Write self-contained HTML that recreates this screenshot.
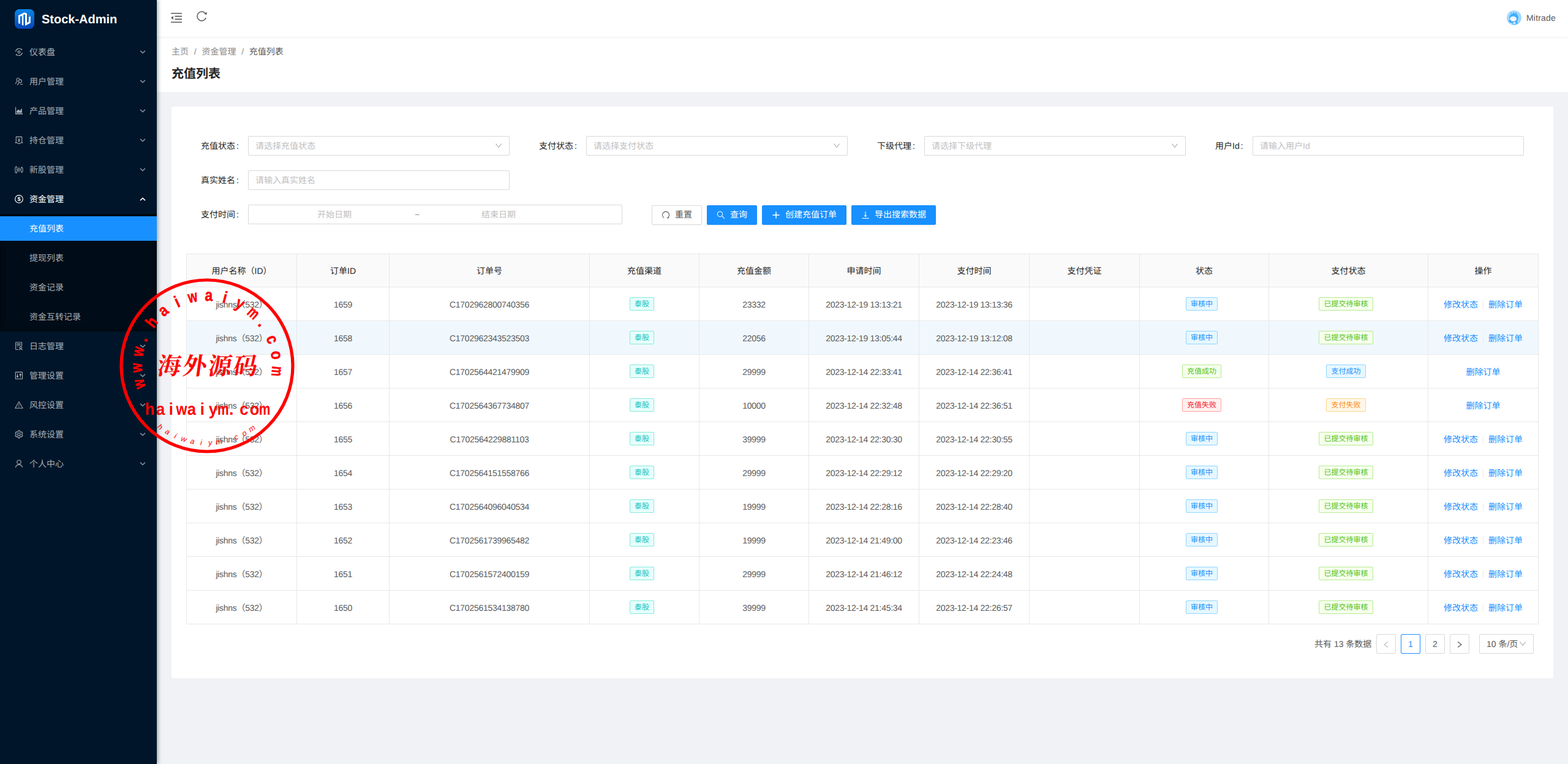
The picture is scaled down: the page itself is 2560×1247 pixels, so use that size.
<!DOCTYPE html>
<html lang="zh-CN"><head><meta charset="utf-8"><title>&#x5145;&#x503c;&#x5217;&#x8868; - Stock-Admin</title>
<style>
html,body{margin:0;padding:0}
body{width:2560px;height:1247px;position:relative;overflow:hidden;background:#f0f2f5;font-family:"Liberation Sans","Noto Sans CJK SC",sans-serif;font-size:14px;line-height:22px;color:#595959;text-rendering:geometricPrecision}
#side{position:absolute;left:0;top:0;width:256px;height:1247px;background:#001529;box-shadow:2px 0 6px rgba(0,21,41,.35);z-index:5}
#logo{position:absolute;left:24px;top:15px;width:32px;height:32px}
#logo svg{display:block}
#brand{position:absolute;left:68px;top:16px;line-height:32px;font-size:20px;font-weight:bold;color:#fff;white-space:nowrap}
.mi,.si{position:absolute;left:0;width:256px;height:40px;line-height:40px;color:#a6adb4;white-space:nowrap}
.mi .ic{position:absolute;left:24px;top:13px}
.mt{position:absolute;left:48px;top:0}
.ar{position:absolute;left:227px;top:16px;color:#7e8a96}
.mi.op{color:#fff}
.mi.op .ar{color:#fff}
#sub{position:absolute;left:0;width:256px;background:#000c17;box-shadow:inset 0 2px 8px rgba(0,0,0,.45)}
.si.sel{background:#1890ff;color:#fff}
#hdr{position:absolute;left:256px;top:0;width:2304px;height:60px;background:#fff;box-shadow:0 1px 4px rgba(0,21,41,.08);z-index:3}
#fold{position:absolute;left:23px;top:21px}
#reload{position:absolute;left:64.6px;top:18.4px}
#ava{position:absolute;left:2204px;top:17px;width:24px;height:24px}
#ava svg{display:block}
#uname{position:absolute;left:2236px;top:18px;line-height:22px;color:#595959;letter-spacing:.2px}
#ph{position:absolute;left:256px;top:60px;width:2304px;height:90px;background:#fff;z-index:2}
#bc{position:absolute;left:24px;top:13px;line-height:22px;color:#8c8c8c;white-space:nowrap}
#bc i{font-style:normal;display:inline-block;width:5.4px;text-align:center;margin:0 8px;color:#8c8c8c}
#bc .last{color:#595959}
#ttl{position:absolute;left:24px;top:45px;font-size:20px;line-height:32px;color:#262626;font-weight:bold}
#card{position:absolute;left:280px;top:174px;width:2256px;height:933px;background:#fff;border-radius:2px}
.lb{position:absolute;height:32px;line-height:32px;color:#262626;white-space:nowrap}
.lb b{font-weight:normal;margin-left:2px}
.ctl{position:absolute;height:30px;line-height:30px;border:1px solid #d9d9d9;border-radius:2px;background:#fff;white-space:nowrap}
.phd{position:absolute;left:11px;top:0;color:#bfbfbf}
.chev{position:absolute;right:11px;top:9px}
.rng .r1{left:112px}
.rng .r2{left:380px}
.til{position:absolute;left:271px;top:0;color:#8c8c8c}
.btn{position:absolute;top:335px;height:30px;line-height:30px;border:1px solid #d9d9d9;border-radius:2px;background:#fff;color:#595959;white-space:nowrap;box-shadow:0 2px 0 rgba(0,0,0,.015)}
.btn.pri{background:#1890ff;border-color:#1890ff;color:#fff;box-shadow:0 2px 0 rgba(0,0,0,.045)}
.btn .bi{position:absolute;left:15px;top:8px}
.btn span{position:absolute;left:37px;top:-1px}
#tb{position:absolute;left:304px;top:414px;width:2208px;height:605px;background:#fff}
.thbg{position:absolute;left:0;top:0;width:2208px;height:54px;background:#fafafa}
.hov{position:absolute;left:0;top:110px;width:2208px;height:54px;background:#f0f8fe}
.hl{position:absolute;left:0;width:2208px;height:1px;background:#e8e8e8}
.vl{position:absolute;top:0;width:1px;height:605px;background:#e8e8e8}
.c{position:absolute;box-sizing:border-box;padding-top:2px;display:flex;align-items:center;justify-content:center;white-space:nowrap;color:#595959;letter-spacing:-.28px}
.c.th{color:#262626;letter-spacing:0;padding-top:0}
.tag{position:relative;top:-1px;display:inline-block;height:20px;line-height:20px;padding:0 7px;margin-right:8px;border:1px solid;border-radius:2px;font-size:12px;letter-spacing:0}
.tag.cyan{color:#13c2c2;background:#e6fffb;border-color:#87e8de}
.tag.blue{color:#1890ff;background:#e6f7ff;border-color:#91d5ff}
.tag.green{color:#52c41a;background:#f6ffed;border-color:#b7eb8f}
.tag.red{color:#f5222d;background:#fff1f0;border-color:#ffa39e}
.tag.orange{color:#fa8c16;background:#fff7e6;border-color:#ffd591}
.c a{color:#1890ff;letter-spacing:0}
.c s{display:inline-block;width:1px;height:13px;background:#e8e8e8;margin:0 8px;text-decoration:none}
#pg{position:absolute;left:0;top:1035px;width:2560px;height:32px}
#pg>div{position:absolute;top:0;height:30px;line-height:30px;white-space:nowrap}
.tot{height:32px!important;line-height:32px!important;color:#595959}
.pb{width:30px;border:1px solid #d9d9d9;border-radius:2px;text-align:center;color:#595959;background:#fff}
.pb{position:absolute}.pb svg{position:absolute;left:9px;top:10px}
.pb.dis{color:#bfbfbf}
.pb.act{border-color:#1890ff;color:#1890ff}
.ps{width:87px;border:1px solid #d9d9d9;border-radius:2px;background:#fff;color:#595959}
.ps span{position:absolute;left:11px;top:0}
#stamp{position:absolute;left:187.8px;top:446.7px;z-index:9;pointer-events:none}

</style></head>
<body>
<div id="side">
<div id="logo"><svg width="32" height="32" viewBox="0 0 32 32"><defs><linearGradient id="lg" x1="0" y1="0" x2="0" y2="1"><stop offset="0" stop-color="#0a86ea"/><stop offset="1" stop-color="#0345b6"/></linearGradient></defs><rect width="32" height="32" rx="7.5" fill="url(#lg)"/><path fill="#fff" d="M6 10.3L15.8 5.2L20 7.1V22.05L22.9 20.4V12.95L25.8 11.6V22.6L17 27.1V9L15.8 8.4L14.3 9.1V26.9L11.8 25.4V11.6L10.4 10.9L8.9 11.95V24.1L6 23.1Z"/><path fill="#f56a1c" d="M22.9 9.3L25.4 10.7L22.9 12.1Z"/></svg></div>
<div id="brand">Stock-Admin</div>
<div class="mi" style="top:65px"><svg class="ic" width="14" height="14" viewBox="0 0 14 14"><g fill="none" stroke="currentColor" stroke-width="1.15"><path d="M1.6 6.2A5.6 5.6 0 0 1 11 2.8"/><path d="M12.4 7.8A5.6 5.6 0 0 1 3 11.2"/><circle cx="7" cy="7" r="1.9"/></g><path fill="currentColor" d="M9.6 1.4L12.4 1.9L11.2 4.4ZM4.4 12.6L1.6 12.1L2.8 9.6Z"/></svg><span class="mt">仪表盘</span><svg class="ar" width="12" height="8" viewBox="0 0 12 8"><path d="M2 1.9L6 5.6L10 1.9" fill="none" stroke="currentColor" stroke-width="1.6"/></svg></div>
<div class="mi" style="top:113px"><svg class="ic" width="14" height="14" viewBox="0 0 14 14"><g fill="none" stroke="currentColor" stroke-width="1.1" stroke-linecap="round"><path d="M7.6 2.6A2.5 2.5 0 1 0 4.4 6.2"/><path d="M4.2 6.6Q2 8 1.6 10.6"/><circle cx="8.9" cy="6.4" r="2.5"/><path d="M7.4 8.5L4.5 12.6"/><path d="M9.4 11.5H12.8"/></g></svg><span class="mt">用户管理</span><svg class="ar" width="12" height="8" viewBox="0 0 12 8"><path d="M2 1.9L6 5.6L10 1.9" fill="none" stroke="currentColor" stroke-width="1.6"/></svg></div>
<div class="mi" style="top:161px"><svg class="ic" width="14" height="14" viewBox="0 0 14 14"><path fill="currentColor" d="M1 .8H2.15V11.1H13.1V12.6H1ZM3.1 10.2V7.3L6 4.4L8.3 6.9L11.8 2.7V10.2Z"/></svg><span class="mt">产品管理</span><svg class="ar" width="12" height="8" viewBox="0 0 12 8"><path d="M2 1.9L6 5.6L10 1.9" fill="none" stroke="currentColor" stroke-width="1.6"/></svg></div>
<div class="mi" style="top:209px"><svg class="ic" width="14" height="14" viewBox="0 0 14 14"><g fill="none" stroke="currentColor" stroke-width="1.1" stroke-linejoin="round"><path d="M.7 10.7H2.3V1.4H11.7V10.7H13.3"/><path d="M.7 10.8Q4.5 11 7 12.7Q9.5 11 13.3 10.8"/><path d="M5.3 3.8L7 6.2L8.7 3.8M7 6.2V9.8M5.5 6.9H8.5M5.5 8.3H8.5" stroke-width="1"/></g></svg><span class="mt">持仓管理</span><svg class="ar" width="12" height="8" viewBox="0 0 12 8"><path d="M2 1.9L6 5.6L10 1.9" fill="none" stroke="currentColor" stroke-width="1.6"/></svg></div>
<div class="mi" style="top:257px"><svg class="ic" width="14" height="14" viewBox="0 0 14 14"><g fill="none" stroke="currentColor" stroke-width="1.05" stroke-linejoin="round"><path d="M2.4 1.6L3.9 3.5V10.7L2.4 12.6L.9 10.7V3.5Z"/><path d="M11.6 2.6L13.1 4.7V9.5L11.6 11.6L10.2 9.5V4.7Z"/><circle cx="6.9" cy="6.9" r="1.5"/><path d="M6.9 2.6V5.4M6.9 8.4V11.4" stroke-opacity=".75"/></g></svg><span class="mt">新股管理</span><svg class="ar" width="12" height="8" viewBox="0 0 12 8"><path d="M2 1.9L6 5.6L10 1.9" fill="none" stroke="currentColor" stroke-width="1.6"/></svg></div>
<div class="mi op" style="top:305px"><svg class="ic" width="14" height="14" viewBox="0 0 14 14"><circle cx="7" cy="6.9" r="6.3" fill="none" stroke="currentColor" stroke-width="1.15"/><text x="7" y="10.1" font-family="Liberation Sans" font-weight="bold" font-size="9.2" text-anchor="middle" fill="currentColor">$</text></svg><span class="mt">资金管理</span><svg class="ar" width="12" height="8" viewBox="0 0 12 8"><path d="M2 6.1L6 2.4L10 6.1" fill="none" stroke="currentColor" stroke-width="1.6"/></svg></div>
<div id="sub" style="top:349px;height:192px"></div>
<div class="si sel" style="top:353px"><span class="mt">充值列表</span></div>
<div class="si" style="top:401px"><span class="mt">提现列表</span></div>
<div class="si" style="top:449px"><span class="mt">资金记录</span></div>
<div class="si" style="top:497px"><span class="mt">资金互转记录</span></div>
<div class="mi" style="top:545px"><svg class="ic" width="14" height="14" viewBox="0 0 14 14"><g fill="none" stroke="currentColor" stroke-width="1.1"><path d="M11.6 6.8V1.3Q11.6 .7 11 .7H2.2Q1.6 .7 1.6 1.3V11.9Q1.6 12.5 2.2 12.5H5.9"/><path d="M3.3 3.4H9.7M3.3 5.5H9.7"/><path d="M3.5 8H6.2" stroke-opacity=".6"/><circle cx="9.85" cy="9.4" r="1.75"/><path d="M7.2 13.4Q8.2 11.5 9.85 11.5Q11.5 11.5 12.6 13.4"/></g></svg><span class="mt">日志管理</span><svg class="ar" width="12" height="8" viewBox="0 0 12 8"><path d="M2 1.9L6 5.6L10 1.9" fill="none" stroke="currentColor" stroke-width="1.6"/></svg></div>
<div class="mi" style="top:593px"><svg class="ic" width="14" height="14" viewBox="0 0 14 14"><g fill="none" stroke="currentColor" stroke-width="1.1"><rect x="1.35" y="1.35" width="11.2" height="11.2" rx=".4"/><path d="M4.55 3.3V10.8M9.3 3.3V10.8" stroke-width=".9"/><circle cx="4.55" cy="8.3" r="1.1"/><circle cx="9.3" cy="5.5" r="1.1"/></g></svg><span class="mt">管理设置</span><svg class="ar" width="12" height="8" viewBox="0 0 12 8"><path d="M2 1.9L6 5.6L10 1.9" fill="none" stroke="currentColor" stroke-width="1.6"/></svg></div>
<div class="mi" style="top:641px"><svg class="ic" width="14" height="14" viewBox="0 0 14 14"><g fill="none" stroke="currentColor" stroke-width="1.1" stroke-linejoin="round"><path d="M6.95 1.7L13.1 12.3H.8Z"/><path d="M6.95 5.6V9.2" stroke-opacity=".8"/><path d="M6.95 10V10.9"/></g></svg><span class="mt">风控设置</span><svg class="ar" width="12" height="8" viewBox="0 0 12 8"><path d="M2 1.9L6 5.6L10 1.9" fill="none" stroke="currentColor" stroke-width="1.6"/></svg></div>
<div class="mi" style="top:689px"><svg class="ic" width="14" height="14" viewBox="0 0 14 14"><g fill="none" stroke="currentColor" stroke-width="1.1" stroke-linejoin="round"><path d="M5.7 .9H8.2L8.6 2.6L9.9 3.4L11.6 2.9L12.9 5.1L11.6 6.3V7.5L12.9 8.7L11.6 10.9L9.9 10.4L8.6 11.2L8.2 12.9H5.7L5.3 11.2L4 10.4L2.3 10.9L1 8.7L2.3 7.5V6.3L1 5.1L2.3 2.9L4 3.4L5.3 2.6Z"/><circle cx="6.95" cy="6.9" r="2.2"/></g></svg><span class="mt">系统设置</span><svg class="ar" width="12" height="8" viewBox="0 0 12 8"><path d="M2 1.9L6 5.6L10 1.9" fill="none" stroke="currentColor" stroke-width="1.6"/></svg></div>
<div class="mi" style="top:737px"><svg class="ic" width="14" height="14" viewBox="0 0 14 14"><g fill="none" stroke="currentColor" stroke-width="1.15" stroke-linecap="round"><circle cx="6.95" cy="4.2" r="3.2"/><path d="M1.5 12.7A5.6 5.6 0 0 1 12.4 12.7"/></g></svg><span class="mt">个人中心</span><svg class="ar" width="12" height="8" viewBox="0 0 12 8"><path d="M2 1.9L6 5.6L10 1.9" fill="none" stroke="currentColor" stroke-width="1.6"/></svg></div>
</div>
<div id="hdr"><svg id="fold" width="18" height="16" viewBox="0 0 18 16" fill="#595959"><rect x="0" y="0" width="18" height="1.6" rx=".2"/><rect x="0" y="14.4" width="18" height="1.6" rx=".2"/><rect x="6.5" y="4.8" width="11.5" height="1.6" rx=".2"/><rect x="6.5" y="9.6" width="11.5" height="1.6" rx=".2"/><path d="M0 8L3.9 5V11Z"/></svg><svg id="reload" width="18" height="18" viewBox="0 0 18 18"><path d="M15.3 11.1A7.4 7.4 0 1 1 14.2 3.9" fill="none" stroke="#595959" stroke-width="1.5"/><path d="M16.6 1.6L16.5 6.1L12.3 4.9Z" fill="#595959"/></svg><div id="ava"><svg width="24" height="24" viewBox="0 0 24 24"><circle cx="12" cy="12" r="12" fill="#a5d8ff"/><path d="M4.6 14.5C3.2 9.5 6.5 5.2 9.8 5.3L11.5 2.6L13 5.2L15.8 3.2L16.6 6.6C19.6 9 19.6 13.8 17.3 16.2L17.8 21.6Q14.5 23.6 10.4 23.3L8.6 20.2L3.4 19.2Q2.6 17.2 4.6 14.5Z" fill="#40b0ff"/><ellipse cx="10.6" cy="14" rx="5.4" ry="4.3" fill="#fff"/><path d="M5.2 14.5A5.6 4.6 0 0 0 16 15.4" fill="none" stroke="#3a7de0" stroke-width=".7"/><path d="M8 13.4L8.9 14.2M12 13.6L13 13.1" stroke="#6f8fe0" stroke-width=".7"/><path d="M10.2 19.6L14.2 18.6L14.8 21.8L10.8 22.4Z" fill="#d5ecff"/><path d="M6.4 3.4L8 5" stroke="#2f6fe0" stroke-width=".8"/></svg></div><div id="uname">Mitrade</div></div>
<div id="ph">
<div id="bc"><span>主页</span><i>/</i><span>资金管理</span><i>/</i><span class="last">充值列表</span></div>
<div id="ttl">充值列表</div>
</div>
<div id="card"></div>
<div class="lb" style="left:328px;top:222px">充值状态<b>:</b></div>
<div class="ctl" style="left:405px;top:222px;width:425px"><span class="phd">请选择充值状态</span><svg class="chev" width="12" height="12" viewBox="0 0 12 12"><path d="M1.5 2.7L6 8.5L10.5 2.7" fill="none" stroke="#b2b2b2" stroke-width="1.15"/></svg></div>
<div class="lb" style="left:880px;top:222px">支付状态<b>:</b></div>
<div class="ctl" style="left:957px;top:222px;width:425px"><span class="phd">请选择支付状态</span><svg class="chev" width="12" height="12" viewBox="0 0 12 12"><path d="M1.5 2.7L6 8.5L10.5 2.7" fill="none" stroke="#b2b2b2" stroke-width="1.15"/></svg></div>
<div class="lb" style="left:1432px;top:222px">下级代理<b>:</b></div>
<div class="ctl" style="left:1509px;top:222px;width:425px"><span class="phd">请选择下级代理</span><svg class="chev" width="12" height="12" viewBox="0 0 12 12"><path d="M1.5 2.7L6 8.5L10.5 2.7" fill="none" stroke="#b2b2b2" stroke-width="1.15"/></svg></div>
<div class="lb" style="left:1984px;top:222px">用户Id<b>:</b></div>
<div class="ctl" style="left:2045px;top:222px;width:441px"><span class="phd">请输入用户Id</span></div>
<div class="lb" style="left:328px;top:278px">真实姓名<b>:</b></div>
<div class="ctl" style="left:405px;top:278px;width:425px"><span class="phd">请输入真实姓名</span></div>
<div class="lb" style="left:328px;top:334px">支付时间<b>:</b></div>
<div class="ctl rng" style="left:405px;top:334px;width:609px"><span class="phd r1">开始日期</span><span class="til">~</span><span class="phd r2">结束日期</span></div>
<div class="btn" style="left:1064px;width:80px"><svg class="bi" width="14" height="14" viewBox="0 0 14 14"><path d="M4.1 11.5A5.5 5.5 0 1 1 10.3 11.3" fill="none" stroke="currentColor" stroke-width="1.05"/><path d="M8.6 11.3L11.6 10.2L11.4 12.9Z" fill="currentColor"/></svg><span>重置</span></div>
<div class="btn pri" style="left:1154px;width:80px"><svg class="bi" width="14" height="14" viewBox="0 0 14 14"><g fill="none" stroke="currentColor" stroke-width="1.1"><circle cx="5.45" cy="5.4" r="4.1"/><path d="M8.5 8.4L12.9 12.8"/></g></svg><span>查询</span></div>
<div class="btn pri" style="left:1244px;width:136px"><svg class="bi" width="14" height="14" viewBox="0 0 14 14"><path d="M7 1.4V12.6M1.4 7H12.6" fill="none" stroke="currentColor" stroke-width="1.5"/></svg><span>创建充值订单</span></div>
<div class="btn pri" style="left:1390px;width:136px"><svg class="bi" width="14" height="14" viewBox="0 0 14 14"><path d="M1.4 12.3H12.6" stroke="currentColor" stroke-width="1.1"/><path d="M7 1.3V8" stroke="currentColor" stroke-width="1.1"/><path d="M4.5 7.4H9.5L7 10.3Z" fill="currentColor"/></svg><span>导出搜索数据</span></div>
<div id="tb">
<div class="thbg"></div>
<div class="hov"></div>
<div class="hl" style="top:0px"></div>
<div class="hl" style="top:54px"></div>
<div class="hl" style="top:109px"></div>
<div class="hl" style="top:164px"></div>
<div class="hl" style="top:219px"></div>
<div class="hl" style="top:274px"></div>
<div class="hl" style="top:329px"></div>
<div class="hl" style="top:384px"></div>
<div class="hl" style="top:439px"></div>
<div class="hl" style="top:494px"></div>
<div class="hl" style="top:549px"></div>
<div class="hl" style="top:604px"></div>
<div class="vl" style="left:0px"></div>
<div class="vl" style="left:180px"></div>
<div class="vl" style="left:331px"></div>
<div class="vl" style="left:658px"></div>
<div class="vl" style="left:837px"></div>
<div class="vl" style="left:1016px"></div>
<div class="vl" style="left:1196px"></div>
<div class="vl" style="left:1376px"></div>
<div class="vl" style="left:1556px"></div>
<div class="vl" style="left:1767px"></div>
<div class="vl" style="left:2027px"></div>
<div class="vl" style="left:2207px"></div>
<div class="c th" style="left:1px;top:1px;width:179px;height:53px">用户名称（ID）</div>
<div class="c th" style="left:181px;top:1px;width:150px;height:53px">订单ID</div>
<div class="c th" style="left:332px;top:1px;width:326px;height:53px">订单号</div>
<div class="c th" style="left:659px;top:1px;width:178px;height:53px">充值渠道</div>
<div class="c th" style="left:838px;top:1px;width:178px;height:53px">充值金额</div>
<div class="c th" style="left:1017px;top:1px;width:179px;height:53px">申请时间</div>
<div class="c th" style="left:1197px;top:1px;width:179px;height:53px">支付时间</div>
<div class="c th" style="left:1377px;top:1px;width:179px;height:53px">支付凭证</div>
<div class="c th" style="left:1557px;top:1px;width:210px;height:53px">状态</div>
<div class="c th" style="left:1768px;top:1px;width:259px;height:53px">支付状态</div>
<div class="c th" style="left:2028px;top:1px;width:179px;height:53px">操作</div>
<div class="c " style="left:1px;top:55px;width:179px;height:54px">jishns（532）</div>
<div class="c " style="left:181px;top:55px;width:150px;height:54px">1659</div>
<div class="c " style="left:332px;top:55px;width:326px;height:54px">C1702962800740356</div>
<div class="c " style="left:659px;top:55px;width:178px;height:54px"><span class="tag cyan">泰股</span></div>
<div class="c " style="left:838px;top:55px;width:178px;height:54px">23332</div>
<div class="c " style="left:1017px;top:55px;width:179px;height:54px">2023-12-19 13:13:21</div>
<div class="c " style="left:1197px;top:55px;width:179px;height:54px">2023-12-19 13:13:36</div>
<div class="c " style="left:1557px;top:55px;width:210px;height:54px"><span class="tag blue">审核中</span></div>
<div class="c " style="left:1768px;top:55px;width:259px;height:54px"><span class="tag green">已提交待审核</span></div>
<div class="c " style="left:2028px;top:55px;width:179px;height:54px"><a>修改状态</a><s></s><a>删除订单</a></div>
<div class="c " style="left:1px;top:110px;width:179px;height:54px">jishns（532）</div>
<div class="c " style="left:181px;top:110px;width:150px;height:54px">1658</div>
<div class="c " style="left:332px;top:110px;width:326px;height:54px">C1702962343523503</div>
<div class="c " style="left:659px;top:110px;width:178px;height:54px"><span class="tag cyan">泰股</span></div>
<div class="c " style="left:838px;top:110px;width:178px;height:54px">22056</div>
<div class="c " style="left:1017px;top:110px;width:179px;height:54px">2023-12-19 13:05:44</div>
<div class="c " style="left:1197px;top:110px;width:179px;height:54px">2023-12-19 13:12:08</div>
<div class="c " style="left:1557px;top:110px;width:210px;height:54px"><span class="tag blue">审核中</span></div>
<div class="c " style="left:1768px;top:110px;width:259px;height:54px"><span class="tag green">已提交待审核</span></div>
<div class="c " style="left:2028px;top:110px;width:179px;height:54px"><a>修改状态</a><s></s><a>删除订单</a></div>
<div class="c " style="left:1px;top:165px;width:179px;height:54px">jishns（532）</div>
<div class="c " style="left:181px;top:165px;width:150px;height:54px">1657</div>
<div class="c " style="left:332px;top:165px;width:326px;height:54px">C1702564421479909</div>
<div class="c " style="left:659px;top:165px;width:178px;height:54px"><span class="tag cyan">泰股</span></div>
<div class="c " style="left:838px;top:165px;width:178px;height:54px">29999</div>
<div class="c " style="left:1017px;top:165px;width:179px;height:54px">2023-12-14 22:33:41</div>
<div class="c " style="left:1197px;top:165px;width:179px;height:54px">2023-12-14 22:36:41</div>
<div class="c " style="left:1557px;top:165px;width:210px;height:54px"><span class="tag green">充值成功</span></div>
<div class="c " style="left:1768px;top:165px;width:259px;height:54px"><span class="tag blue">支付成功</span></div>
<div class="c " style="left:2028px;top:165px;width:179px;height:54px"><a>删除订单</a></div>
<div class="c " style="left:1px;top:220px;width:179px;height:54px">jishns（532）</div>
<div class="c " style="left:181px;top:220px;width:150px;height:54px">1656</div>
<div class="c " style="left:332px;top:220px;width:326px;height:54px">C1702564367734807</div>
<div class="c " style="left:659px;top:220px;width:178px;height:54px"><span class="tag cyan">泰股</span></div>
<div class="c " style="left:838px;top:220px;width:178px;height:54px">10000</div>
<div class="c " style="left:1017px;top:220px;width:179px;height:54px">2023-12-14 22:32:48</div>
<div class="c " style="left:1197px;top:220px;width:179px;height:54px">2023-12-14 22:36:51</div>
<div class="c " style="left:1557px;top:220px;width:210px;height:54px"><span class="tag red">充值失败</span></div>
<div class="c " style="left:1768px;top:220px;width:259px;height:54px"><span class="tag orange">支付失败</span></div>
<div class="c " style="left:2028px;top:220px;width:179px;height:54px"><a>删除订单</a></div>
<div class="c " style="left:1px;top:275px;width:179px;height:54px">jishns（532）</div>
<div class="c " style="left:181px;top:275px;width:150px;height:54px">1655</div>
<div class="c " style="left:332px;top:275px;width:326px;height:54px">C1702564229881103</div>
<div class="c " style="left:659px;top:275px;width:178px;height:54px"><span class="tag cyan">泰股</span></div>
<div class="c " style="left:838px;top:275px;width:178px;height:54px">39999</div>
<div class="c " style="left:1017px;top:275px;width:179px;height:54px">2023-12-14 22:30:30</div>
<div class="c " style="left:1197px;top:275px;width:179px;height:54px">2023-12-14 22:30:55</div>
<div class="c " style="left:1557px;top:275px;width:210px;height:54px"><span class="tag blue">审核中</span></div>
<div class="c " style="left:1768px;top:275px;width:259px;height:54px"><span class="tag green">已提交待审核</span></div>
<div class="c " style="left:2028px;top:275px;width:179px;height:54px"><a>修改状态</a><s></s><a>删除订单</a></div>
<div class="c " style="left:1px;top:330px;width:179px;height:54px">jishns（532）</div>
<div class="c " style="left:181px;top:330px;width:150px;height:54px">1654</div>
<div class="c " style="left:332px;top:330px;width:326px;height:54px">C1702564151558766</div>
<div class="c " style="left:659px;top:330px;width:178px;height:54px"><span class="tag cyan">泰股</span></div>
<div class="c " style="left:838px;top:330px;width:178px;height:54px">29999</div>
<div class="c " style="left:1017px;top:330px;width:179px;height:54px">2023-12-14 22:29:12</div>
<div class="c " style="left:1197px;top:330px;width:179px;height:54px">2023-12-14 22:29:20</div>
<div class="c " style="left:1557px;top:330px;width:210px;height:54px"><span class="tag blue">审核中</span></div>
<div class="c " style="left:1768px;top:330px;width:259px;height:54px"><span class="tag green">已提交待审核</span></div>
<div class="c " style="left:2028px;top:330px;width:179px;height:54px"><a>修改状态</a><s></s><a>删除订单</a></div>
<div class="c " style="left:1px;top:385px;width:179px;height:54px">jishns（532）</div>
<div class="c " style="left:181px;top:385px;width:150px;height:54px">1653</div>
<div class="c " style="left:332px;top:385px;width:326px;height:54px">C1702564096040534</div>
<div class="c " style="left:659px;top:385px;width:178px;height:54px"><span class="tag cyan">泰股</span></div>
<div class="c " style="left:838px;top:385px;width:178px;height:54px">19999</div>
<div class="c " style="left:1017px;top:385px;width:179px;height:54px">2023-12-14 22:28:16</div>
<div class="c " style="left:1197px;top:385px;width:179px;height:54px">2023-12-14 22:28:40</div>
<div class="c " style="left:1557px;top:385px;width:210px;height:54px"><span class="tag blue">审核中</span></div>
<div class="c " style="left:1768px;top:385px;width:259px;height:54px"><span class="tag green">已提交待审核</span></div>
<div class="c " style="left:2028px;top:385px;width:179px;height:54px"><a>修改状态</a><s></s><a>删除订单</a></div>
<div class="c " style="left:1px;top:440px;width:179px;height:54px">jishns（532）</div>
<div class="c " style="left:181px;top:440px;width:150px;height:54px">1652</div>
<div class="c " style="left:332px;top:440px;width:326px;height:54px">C1702561739965482</div>
<div class="c " style="left:659px;top:440px;width:178px;height:54px"><span class="tag cyan">泰股</span></div>
<div class="c " style="left:838px;top:440px;width:178px;height:54px">19999</div>
<div class="c " style="left:1017px;top:440px;width:179px;height:54px">2023-12-14 21:49:00</div>
<div class="c " style="left:1197px;top:440px;width:179px;height:54px">2023-12-14 22:23:46</div>
<div class="c " style="left:1557px;top:440px;width:210px;height:54px"><span class="tag blue">审核中</span></div>
<div class="c " style="left:1768px;top:440px;width:259px;height:54px"><span class="tag green">已提交待审核</span></div>
<div class="c " style="left:2028px;top:440px;width:179px;height:54px"><a>修改状态</a><s></s><a>删除订单</a></div>
<div class="c " style="left:1px;top:495px;width:179px;height:54px">jishns（532）</div>
<div class="c " style="left:181px;top:495px;width:150px;height:54px">1651</div>
<div class="c " style="left:332px;top:495px;width:326px;height:54px">C1702561572400159</div>
<div class="c " style="left:659px;top:495px;width:178px;height:54px"><span class="tag cyan">泰股</span></div>
<div class="c " style="left:838px;top:495px;width:178px;height:54px">29999</div>
<div class="c " style="left:1017px;top:495px;width:179px;height:54px">2023-12-14 21:46:12</div>
<div class="c " style="left:1197px;top:495px;width:179px;height:54px">2023-12-14 22:24:48</div>
<div class="c " style="left:1557px;top:495px;width:210px;height:54px"><span class="tag blue">审核中</span></div>
<div class="c " style="left:1768px;top:495px;width:259px;height:54px"><span class="tag green">已提交待审核</span></div>
<div class="c " style="left:2028px;top:495px;width:179px;height:54px"><a>修改状态</a><s></s><a>删除订单</a></div>
<div class="c " style="left:1px;top:550px;width:179px;height:54px">jishns（532）</div>
<div class="c " style="left:181px;top:550px;width:150px;height:54px">1650</div>
<div class="c " style="left:332px;top:550px;width:326px;height:54px">C1702561534138780</div>
<div class="c " style="left:659px;top:550px;width:178px;height:54px"><span class="tag cyan">泰股</span></div>
<div class="c " style="left:838px;top:550px;width:178px;height:54px">39999</div>
<div class="c " style="left:1017px;top:550px;width:179px;height:54px">2023-12-14 21:45:34</div>
<div class="c " style="left:1197px;top:550px;width:179px;height:54px">2023-12-14 22:26:57</div>
<div class="c " style="left:1557px;top:550px;width:210px;height:54px"><span class="tag blue">审核中</span></div>
<div class="c " style="left:1768px;top:550px;width:259px;height:54px"><span class="tag green">已提交待审核</span></div>
<div class="c " style="left:2028px;top:550px;width:179px;height:54px"><a>修改状态</a><s></s><a>删除订单</a></div>
</div>
<div id="pg">
<div class="tot" style="left:2146px">共有 13 条数据</div>
<div class="pb dis" style="left:2247px"><svg width="12" height="12" viewBox="0 0 12 12"><path d="M9 1.4L3 6L9 10.6" fill="none" stroke="currentColor" stroke-width="1.2"/></svg></div>
<div class="pb act" style="left:2287px">1</div>
<div class="pb" style="left:2327px">2</div>
<div class="pb" style="left:2367px"><svg width="12" height="12" viewBox="0 0 12 12"><path d="M3 1.4L9 6L3 10.6" fill="none" stroke="currentColor" stroke-width="1.2"/></svg></div>
<div class="ps" style="left:2415px"><span>10 条/页</span><svg class="chev" width="12" height="12" viewBox="0 0 12 12"><path d="M1.5 2.7L6 8.5L10.5 2.7" fill="none" stroke="#b2b2b2" stroke-width="1.15"/></svg></div>
</div>
<svg id="stamp" width="300" height="300" viewBox="-150 -150 300 300" fill="#f00" font-family="Liberation Sans, sans-serif"><circle r="140.0" fill="none" stroke="#f00" stroke-width="5.2"/><text transform="translate(-102.6 27.5) rotate(255.0) scale(0.73 1)" text-anchor="middle" font-size="27" font-weight="bold" stroke="#f00" stroke-width=".55">w</text><text transform="translate(-106.2 3.1) rotate(268.3) scale(0.73 1)" text-anchor="middle" font-size="27" font-weight="bold" stroke="#f00" stroke-width=".55">w</text><text transform="translate(-104.0 -21.4) rotate(281.6) scale(0.73 1)" text-anchor="middle" font-size="27" font-weight="bold" stroke="#f00" stroke-width=".55">w</text><text transform="translate(-98.0 -41.0) rotate(292.7) scale(0.85 1)" text-anchor="middle" font-size="27" font-weight="bold" stroke="#f00" stroke-width=".55">.</text><text transform="translate(-83.4 -65.7) rotate(308.2) scale(0.85 1)" text-anchor="middle" font-size="27" font-weight="bold" stroke="#f00" stroke-width=".55">h</text><text transform="translate(-66.1 -83.2) rotate(321.5) scale(0.85 1)" text-anchor="middle" font-size="27" font-weight="bold" stroke="#f00" stroke-width=".55">a</text><text transform="translate(-45.2 -96.1) rotate(334.8) scale(0.85 1)" text-anchor="middle" font-size="27" font-weight="bold" stroke="#f00" stroke-width=".55">i</text><text transform="translate(-21.8 -103.9) rotate(348.1) scale(0.73 1)" text-anchor="middle" font-size="27" font-weight="bold" stroke="#f00" stroke-width=".55">w</text><text transform="translate(2.7 -106.2) rotate(361.5) scale(0.85 1)" text-anchor="middle" font-size="27" font-weight="bold" stroke="#f00" stroke-width=".55">a</text><text transform="translate(27.1 -102.7) rotate(374.8) scale(0.85 1)" text-anchor="middle" font-size="27" font-weight="bold" stroke="#f00" stroke-width=".55">i</text><text transform="translate(50.0 -93.7) rotate(388.1) scale(0.85 1)" text-anchor="middle" font-size="27" font-weight="bold" stroke="#f00" stroke-width=".55">y</text><text transform="translate(70.2 -79.7) rotate(401.4) scale(0.68 1)" text-anchor="middle" font-size="27" font-weight="bold" stroke="#f00" stroke-width=".55">m</text><text transform="translate(84.2 -64.7) rotate(412.5) scale(0.85 1)" text-anchor="middle" font-size="27" font-weight="bold" stroke="#f00" stroke-width=".55">.</text><text transform="translate(98.5 -39.8) rotate(428.0) scale(0.85 1)" text-anchor="middle" font-size="27" font-weight="bold" stroke="#f00" stroke-width=".55">c</text><text transform="translate(105.0 -16.1) rotate(441.3) scale(0.85 1)" text-anchor="middle" font-size="27" font-weight="bold" stroke="#f00" stroke-width=".55">o</text><text transform="translate(105.9 8.5) rotate(454.6) scale(0.68 1)" text-anchor="middle" font-size="27" font-weight="bold" stroke="#f00" stroke-width=".55">m</text><text transform="translate(-82.5 13.8) skewX(-8)" x="0 41.4 82.8 124.2" y="0" font-size="38.7" font-weight="bold" fill="#f00" font-family="'Liberation Serif','Noto Serif CJK SC',serif">海外源码</text><text transform="translate(-93.5 79.8) scale(0.93 1)" text-anchor="middle" font-size="27.5" font-weight="bold">h</text><text transform="translate(-76.0 79.8) scale(0.93 1)" text-anchor="middle" font-size="27.5" font-weight="bold">a</text><text transform="translate(-58.8 79.8) scale(0.93 1)" text-anchor="middle" font-size="27.5" font-weight="bold">i</text><text transform="translate(-41.6 79.8) scale(0.84 1)" text-anchor="middle" font-size="27.5" font-weight="bold">w</text><text transform="translate(-25.2 79.8) scale(0.93 1)" text-anchor="middle" font-size="27.5" font-weight="bold">a</text><text transform="translate(-7.7 79.8) scale(0.93 1)" text-anchor="middle" font-size="27.5" font-weight="bold">i</text><text transform="translate(9.9 79.8) scale(0.93 1)" text-anchor="middle" font-size="27.5" font-weight="bold">y</text><text transform="translate(26.2 79.8) scale(0.76 1)" text-anchor="middle" font-size="27.5" font-weight="bold">m</text><text transform="translate(39.7 79.8) scale(0.93 1)" text-anchor="middle" font-size="27.5" font-weight="bold">.</text><text transform="translate(60.3 79.8) scale(0.93 1)" text-anchor="middle" font-size="27.5" font-weight="bold">c</text><text transform="translate(77.5 79.8) scale(0.93 1)" text-anchor="middle" font-size="27.5" font-weight="bold">o</text><text transform="translate(94.1 79.8) scale(0.76 1)" text-anchor="middle" font-size="27.5" font-weight="bold">m</text><text transform="translate(-79.0 103.0) rotate(37.5)" text-anchor="middle" font-size="12.5" font-weight="normal" font-style="italic">h</text><text transform="translate(-66.6 111.4) rotate(30.9)" text-anchor="middle" font-size="12.5" font-weight="normal" font-style="italic">a</text><text transform="translate(-53.3 118.4) rotate(24.2)" text-anchor="middle" font-size="12.5" font-weight="normal" font-style="italic">i</text><text transform="translate(-39.2 123.7) rotate(17.6)" text-anchor="middle" font-size="12.5" font-weight="normal" font-style="italic">w</text><text transform="translate(-24.7 127.4) rotate(11.0)" text-anchor="middle" font-size="12.5" font-weight="normal" font-style="italic">a</text><text transform="translate(-9.8 129.4) rotate(4.3)" text-anchor="middle" font-size="12.5" font-weight="normal" font-style="italic">i</text><text transform="translate(5.3 129.7) rotate(-2.3)" text-anchor="middle" font-size="12.5" font-weight="normal" font-style="italic">y</text><text transform="translate(20.2 128.2) rotate(-9.0)" text-anchor="middle" font-size="12.5" font-weight="normal" font-style="italic">m</text><text transform="translate(34.9 125.0) rotate(-15.6)" text-anchor="middle" font-size="12.5" font-weight="normal" font-style="italic">.</text><text transform="translate(49.1 120.2) rotate(-22.2)" text-anchor="middle" font-size="12.5" font-weight="normal" font-style="italic">c</text><text transform="translate(62.7 113.7) rotate(-28.9)" text-anchor="middle" font-size="12.5" font-weight="normal" font-style="italic">o</text><text transform="translate(75.4 105.7) rotate(-35.5)" text-anchor="middle" font-size="12.5" font-weight="normal" font-style="italic">m</text></svg>
</body></html>
